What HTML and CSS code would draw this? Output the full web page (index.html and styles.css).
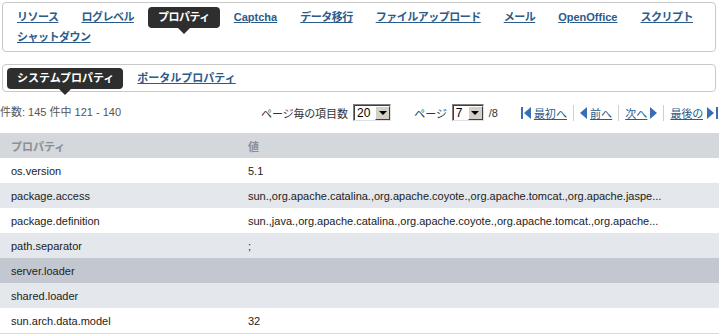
FILE: index.html
```html
<!DOCTYPE html>
<html lang="ja">
<head>
<meta charset="utf-8">
<title>プロパティ</title>
<link rel="stylesheet" href="styles.css">
</head>
<body>
<nav class="tabs main">
  <a class="tab ja" href="#">リソース</a>
  <a class="tab ja" href="#">ログレベル</a>
  <a class="tab ja active" href="#">プロパティ</a>
  <a class="tab" href="#">Captcha</a>
  <a class="tab ja" href="#">データ移行</a>
  <a class="tab ja" href="#">ファイルアップロード</a>
  <a class="tab ja" href="#">メール</a>
  <a class="tab" href="#">OpenOffice</a>
  <a class="tab ja" href="#">スクリプト</a>
  <a class="tab ja" href="#">シャットダウン</a>
</nav>
<nav class="tabs subtabs">
  <a class="tab active" href="#">システムプロパティ</a>
  <a class="tab" href="#">ポータルプロパティ</a>
</nav>
<div class="info">
  <div class="count">件数: 145 件中 121 - 140</div>
  <div class="controls">
    <span class="label">ページ毎の項目数</span>
    <span class="select sel-20"><span class="val">20</span><span class="btn"><span class="arrow"></span></span></span>
    <span class="label page-label">ページ</span>
    <span class="select sel-7"><span class="val">7</span><span class="btn"><span class="arrow"></span></span></span>
    <span class="label total">/8</span>
    <div class="pager">
      <span class="pitem"><svg class="icon" width="11" height="12" viewBox="0 0 11 12"><rect x="0" y="0" width="2" height="12" fill="#3a6db5"/><polygon points="10,0 3,6 10,12" fill="#3a6db5"/></svg><a href="#">最初へ</a></span>
      <span class="pitem"><svg class="icon" width="8" height="12" viewBox="0 0 8 12"><polygon points="7,0 0,6 7,12" fill="#3a6db5"/></svg><a href="#">前へ</a></span>
      <span class="pitem"><a href="#">次へ</a><svg class="icon" width="8" height="12" viewBox="0 0 8 12"><polygon points="1,0 8,6 1,12" fill="#3a6db5"/></svg></span>
      <span class="pitem last"><a href="#">最後の</a><svg class="icon" width="11" height="12" viewBox="0 0 11 12"><polygon points="0,0 7,6 0,12" fill="#3a6db5"/><rect x="9" y="0" width="2" height="12" fill="#3a6db5"/></svg></span>
    </div>
  </div>
</div>
<table class="props">
  <thead>
    <tr><th class="c1">プロパティ</th><th>値</th></tr>
  </thead>
  <tbody>
    <tr><td class="c1">os.version</td><td>5.1</td></tr>
    <tr class="alt"><td class="c1">package.access</td><td>sun.,org.apache.catalina.,org.apache.coyote.,org.apache.tomcat.,org.apache.jaspe...</td></tr>
    <tr><td class="c1">package.definition</td><td>sun.,java.,org.apache.catalina.,org.apache.coyote.,org.apache.tomcat.,org.apache...</td></tr>
    <tr class="alt"><td class="c1">path.separator</td><td>;</td></tr>
    <tr class="hover"><td class="c1">server.loader</td><td></td></tr>
    <tr class="alt"><td class="c1">shared.loader</td><td></td></tr>
    <tr><td class="c1">sun.arch.data.model</td><td>32</td></tr>
  </tbody>
</table>
</body>
</html>
```
FILE: styles.css
```css
html, body {
  margin: 0;
  padding: 0;
  background: #fff;
}
body {
  font-family: "Liberation Sans", "Noto Sans CJK JP", sans-serif;
  font-size: 11px;
  color: #222;
}
.tabs {
  margin: 2px 7px 0 2px;
  border: 1px solid #c8c8c8;
  border-radius: 4px;
  padding: 4px 5px 4px;
  display: flex;
  flex-wrap: wrap;
  column-gap: 5px;
}
.tab {
  position: relative;
  height: 20px;
  line-height: 20px;
  padding: 0 9px;
  font-weight: bold;
  color: #2b5b8b;
  text-decoration: underline;
  white-space: nowrap;
}
.tab.ja { letter-spacing: -0.5px; }
.tab.active {
  background: #2e2e2e;
  color: #fff;
  text-decoration: none;
  border-radius: 4px;
  line-height: 21px;
  height: 21px;
  padding: 0 10px;
}
.tab.active::after {
  content: "";
  position: absolute;
  left: 50%;
  top: 100%;
  margin-left: -6px;
  border-left: 6px solid transparent;
  border-right: 6px solid transparent;
  border-top: 6px solid #2e2e2e;
}
.main .tab.active { margin-bottom: -1px; }
.subtabs {
  margin-top: 12px;
  padding: 3px 4px 2px;
}
.subtabs .tab.active { padding: 0 9px 0 10px; }
.info {
  height: 41px;
  display: flex;
  align-items: center;
  justify-content: space-between;
  padding-right: 5px;
}
.count {
  color: #555;
  margin-top: -4px;
}
.controls {
  display: flex;
  align-items: center;
  color: #333;
  font-feature-settings: "palt";
}
.select {
  display: inline-flex;
  align-items: stretch;
  height: 17px;
  box-sizing: border-box;
  border-top: 1px solid #808080;
  border-left: 1px solid #808080;
  border-right: 1px solid #e0e0e0;
  border-bottom: 1px solid #e0e0e0;
  box-shadow: inset 1px 1px 0 #404040;
  background: #fff;
  margin-left: 5px;
}
.sel-20 { width: 38px; }
.sel-7 { width: 32px; margin-left: 5px; }
.select .val {
  flex: 1;
  padding-left: 3px;
  padding-top: 1px;
  line-height: 14px;
  font-size: 12px;
  color: #000;
}
.select .btn {
  width: 15px;
  margin: 1px 0 0 0;
  background: #d4d0c8;
  border-top: 1px solid #fff;
  border-left: 1px solid #fff;
  border-right: 1px solid #404040;
  border-bottom: 1px solid #404040;
  box-sizing: border-box;
  display: flex;
  align-items: center;
  justify-content: center;
}
.arrow {
  width: 0;
  height: 0;
  border-left: 4px solid transparent;
  border-right: 4px solid transparent;
  border-top: 4px solid #000;
}
.page-label { margin-left: 23px; }
.total { margin-left: 5px; }
.pager {
  display: flex;
  align-items: center;
  margin-left: 23px;
}
.pitem {
  display: flex;
  align-items: center;
  gap: 2px;
  padding: 0 6px;
  border-right: 1px solid #d0d0d0;
  height: 16px;
}
.pitem:first-child { padding-left: 0; }
.pitem.last { border-right: none; padding-right: 0; gap: 4px; }
.pitem a {
  color: #2b5b8b;
  text-decoration: underline;
}
.icon { display: block; }
.props {
  width: 719px;
  border-collapse: collapse;
  border-bottom: 1px solid #d8dade;
}
.props th, .props td {
  height: 25px;
  padding: 0 0 0 11px;
  text-align: left;
  white-space: nowrap;
  vertical-align: middle;
}
.props .c1 { width: 226px; }
.props th {
  background: #d4d7dc;
  color: #8c8e92;
  font-weight: bold;
}
.props tr.alt td { background: #e4e7eb; }
.props tr.hover td { background: #c3c7cf; }
```
